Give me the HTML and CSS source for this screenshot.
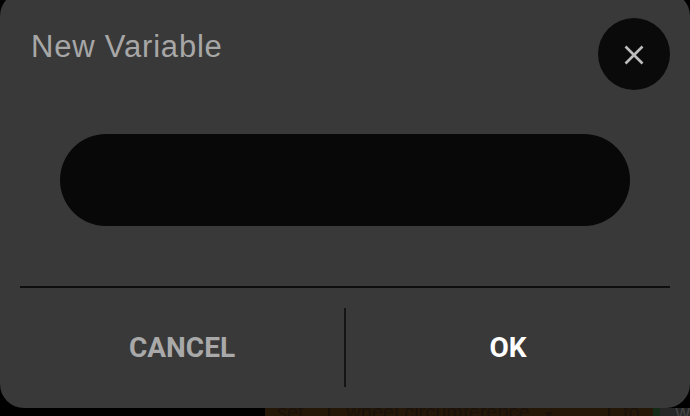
FILE: index.html
```html
<!DOCTYPE html>
<html lang="en">
<head>
<meta charset="utf-8">
<title>New Variable</title>
<link rel="stylesheet" href="styles.css">
</head>
<body>
<div class="dialog">
  <div class="header">
    <h1 class="title">New Variable</h1>
    <button class="close" aria-label="Close">
      <svg width="20" height="20" viewBox="0 0 20 20"><path d="M1.5 1.5 L18.5 18.5 M18.5 1.5 L1.5 18.5" stroke="#bdbdbd" stroke-width="2.6" fill="none" stroke-linecap="butt"/></svg>
    </button>
  </div>
  <input class="field" type="text" aria-label="Variable name">
  <div class="rule"></div>
  <div class="footer">
    <button class="btn cancel">CANCEL</button>
    <div class="vrule"></div>
    <button class="btn ok">OK</button>
  </div>
</div>
<div class="strip">
  <div class="blocks">
    <span class="seg seg-set">set</span>
    <span class="sep"></span>
    <span class="seg seg-var">wheel circumference <span class="caret">▾</span></span>
    <span class="sep"></span>
    <span class="seg seg-to">to</span>
    <span class="green"></span>
    <span class="seg seg-w">w</span>
  </div>
</div>
</body>
</html>
```

FILE: styles.css
```css
html, body {
  margin: 0;
  padding: 0;
  background: #000;
  overflow: hidden;
  width: 690px;
  height: 416px;
}

.dialog {
  box-sizing: border-box;
  width: 690px;
  height: 416px;
  margin-top: -8px;
  padding: 26px 20px 0 20px;
  background: #393939;
  border-radius: 24px;
  display: flex;
  flex-direction: column;
}

.header {
  display: flex;
  justify-content: space-between;
  align-items: flex-start;
  height: 72px;
}

.title {
  margin: 11px 0 0 11px;
  font-family: "Liberation Sans", Arial, sans-serif;
  font-weight: 400;
  font-size: 31px;
  letter-spacing: 0.8px;
  line-height: 36px;
  color: #a7a7a7;
}

.close {
  width: 72px;
  height: 72px;
  border-radius: 50%;
  border: none;
  padding: 0;
  margin: 0;
  background: #0a0a0a;
  display: flex;
  align-items: center;
  justify-content: center;
}

.close svg {
  display: block;
  margin-top: 1px;
}

.field {
  box-sizing: border-box;
  align-self: center;
  width: 570px;
  height: 92px;
  margin-top: 44px;
  border: none;
  outline: none;
  border-radius: 46px;
  background: #080808;
  padding: 0 40px;
  color: #ddd;
  font-family: "Liberation Sans", Arial, sans-serif;
  font-size: 28px;
}

.rule {
  height: 2px;
  margin-top: 60px;
  background: #0e0e0e;
}

.footer {
  display: flex;
  padding-top: 20px;
  height: 79px;
}

.btn {
  flex: 1;
  border: none;
  background: transparent;
  padding: 0;
  margin: 0;
  font-family: Roboto, "Liberation Sans", sans-serif;
  font-weight: 700;
  font-size: 28px;
  line-height: 79px;
}

.cancel {
  color: #a9a9a9;
}

.ok {
  color: #ffffff;
}

.vrule {
  width: 2px;
  background: #151515;
}

.strip {
  height: 8px;
  overflow: hidden;
}

.blocks {
  display: flex;
  margin-left: 265px;
  margin-top: -6px;
  height: 24px;
  font-family: "Liberation Sans", Arial, sans-serif;
  font-size: 20px;
  line-height: 20px;
  color: #19110a;
}

.seg {
  background: #241708;
  white-space: nowrap;
}

.seg-set {
  width: 64px;
  padding-left: 12px;
  box-sizing: border-box;
}

.seg-var {
  width: 281px;
  padding-left: 16px;
  box-sizing: border-box;
}

.caret {
  font-size: 14px;
  margin-left: 10px;
}

.seg-to {
  width: 43px;
  padding-left: 13px;
  box-sizing: border-box;
}

.sep {
  width: 2px;
  background: #171008;
}

.green {
  width: 7px;
  background: #132a16;
}

.seg-w {
  flex: 1;
  padding-left: 16px;
  background: #262626;
  color: #444;
}
```
